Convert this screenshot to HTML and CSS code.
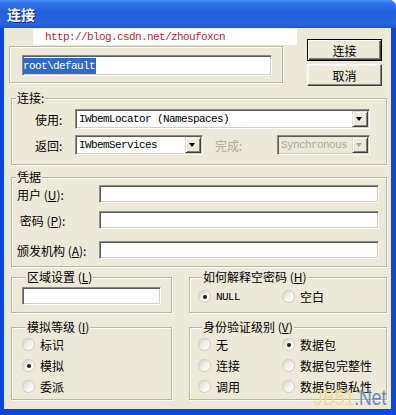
FILE: index.html
```html
<!DOCTYPE html>
<html>
  <head>
    <meta charset="utf-8">
    <title>连接</title>
    <link rel="stylesheet" href="styles.css">
  </head>
  <body>
    <div class="window">
      <div class="titlebar"><span class="title">连接</span></div>

      <div class="client">
        <div class="top">
          <div class="ns-col">
            <div class="url">http://blog.csdn.net/zhoufoxcn</div>
            <div class="ns-frame">
              <div class="sunken ns-field"><span class="sel">root\default</span></div>
            </div>
          </div>
          <div class="buttons">
            <button class="btn default" type="button">连接</button>
            <button class="btn" type="button">取消</button>
          </div>
        </div>

        <fieldset class="group conn">
          <legend>连接:</legend>
          <div class="row">
            <span class="lbl">使用:</span>
            <div class="sunken combo use"><span class="combo-text">IWbemLocator (Namespaces)</span><span class="drop"></span></div>
          </div>
          <div class="row">
            <span class="lbl">返回:</span>
            <div class="sunken combo ret"><span class="combo-text">IWbemServices</span><span class="drop"></span></div>
            <span class="lbl done">完成:</span>
            <div class="sunken combo sync disabled"><span class="combo-text">Synchronous</span><span class="drop"></span></div>
          </div>
        </fieldset>

        <fieldset class="group cred">
          <legend>凭据</legend>
          <div class="cred-row">
            <span class="cred-lbl">用户 (<u>U</u>):</span>
            <div class="sunken cred-field"></div>
          </div>
          <div class="cred-row pwd">
            <span class="cred-lbl">&nbsp;密码 (<u>P</u>):</span>
            <div class="sunken cred-field"></div>
          </div>
          <div class="cred-row auth">
            <span class="cred-lbl">颁发机构 (<u>A</u>):</span>
            <div class="sunken cred-field"></div>
          </div>
        </fieldset>

        <div class="cols">
          <fieldset class="group locale">
            <legend>区域设置 (<u>L</u>)</legend>
            <div class="sunken locale-field"></div>
          </fieldset>

          <fieldset class="group nullpw">
            <legend>如何解释空密码 (<u>H</u>)</legend>
            <div class="radios two">
              <div class="radio"><span class="dot checked"></span><span class="mono">NULL</span></div>
              <div class="radio"><span class="dot"></span>空白</div>
            </div>
          </fieldset>

          <fieldset class="group imp">
            <legend>模拟等级 (<u>I</u>)</legend>
            <div class="radios">
              <div class="radio"><span class="dot"></span>标识</div>
              <div class="radio"><span class="dot checked"></span>模拟</div>
              <div class="radio"><span class="dot"></span>委派</div>
            </div>
          </fieldset>

          <fieldset class="group authlvl">
            <legend>身份验证级别 (<u>V</u>)</legend>
            <div class="radios two">
              <div class="radio"><span class="dot"></span>无</div>
              <div class="radio"><span class="dot checked"></span>数据包</div>
              <div class="radio"><span class="dot"></span>连接</div>
              <div class="radio"><span class="dot"></span>数据包完整性</div>
              <div class="radio"><span class="dot"></span>调用</div>
              <div class="radio"><span class="dot"></span>数据包隐私性</div>
            </div>
          </fieldset>
        </div>
      </div>

      <div class="mark"><span class="jb">JB51</span><span class="net">.Net</span></div>
    </div>
  </body>
</html>
```

FILE: styles.css
```css
body { margin: 0; background: #fff; font-family: "Noto Sans CJK SC", sans-serif; font-size: 12px; color: #000; }

.window { position: relative; width: 396px; height: 415px; display: flex; flex-direction: column; background: #0b47dc; border-radius: 0 7px 0 0; overflow: hidden; }

.titlebar { height: 28px; flex: none; background: linear-gradient(#4a8ff6 0%, #2f72ea 12%, #245fdb 45%, #2766df 85%, #1d55d0 100%); }
.title { display: block; padding-left: 7px; color: #fff; font-weight: bold; font-size: 14px; line-height: 28px; text-shadow: 1px 1px #10208c; }

.client { flex: 1; margin: 0 5px 6px 4px; background: #ece9d8; display: flex; flex-direction: column; }

/* top part: namespace + buttons */
.top { display: flex; height: 59px; flex: none; }
.ns-col { margin-left: 5px; width: 288px; display: flex; flex-direction: column; }
.url { margin: 1px 0 0 24px; width: 264px; height: 16px; box-sizing: border-box; padding-left: 12px; background: #fff; color: #b52a2f; font: 11px/16px "Liberation Mono", monospace; letter-spacing: -0.6px; }
.ns-frame { margin-top: 1px; width: 274px; height: 37px; box-sizing: border-box; padding: 8px 0 0 12px; border: 1px solid #b9b6a6; box-shadow: inset 1px 1px #fff, 1px 1px #fff; }
.ns-field { width: 250px; height: 21px; display: flex; align-items: center; }
.sel { background: #316ac5; color: #fff; font: 11px/16px "Liberation Mono", monospace; letter-spacing: -0.6px; padding-right: 1px; }

.buttons { margin: 11px 0 0 10px; display: flex; flex-direction: column; gap: 3px; }
.btn { width: 75px; height: 22px; padding: 0; font-family: inherit; font-size: 12px; color: #000; background: #ece9d8; border: 1px solid; border-color: #fff #404040 #404040 #fff; box-shadow: inset -1px -1px #808080, inset 1px 1px #f6f5ef; }
.btn.default { border: 1px solid #000; box-shadow: inset 1px 1px #fff, inset -1px -1px #404040, inset -2px -2px #808080; }

/* group boxes */
.group { margin: 0 4px 0 7px; padding: 0; min-width: 0; border: 1px solid #b9b6a6; box-shadow: inset 1px 1px #fff, 1px 1px #fff; }
.group legend { margin-left: 4px; padding: 0 1px; height: 14px; line-height: 14px; font-size: 12px; background: #ece9d8; }

.conn { margin-top: 4px; padding: 4px 0 9px; }
.row { display: flex; align-items: center; height: 20px; padding-left: 23px; }
.row + .row { margin-top: 6px; }
.lbl { width: 40px; flex: none; }
.lbl.done { margin-left: 12px; width: 62px; color: #aca899; }

.sunken { box-sizing: border-box; background: #fff; border: 1px solid; border-color: #8a8a8a #fff #fff #8a8a8a; box-shadow: inset 1px 1px #5c5c5c, inset -1px -1px #d4d0c8; }
.combo { height: 20px; display: flex; align-items: center; padding: 1px; }
.combo.use { width: 295px; }
.combo.ret { width: 128px; }
.combo.sync { width: 93px; }
.combo-text { flex: 1; padding-left: 2px; font: 11px/16px "Liberation Mono", monospace; letter-spacing: -0.6px; white-space: nowrap; overflow: hidden; }
.disabled { background: #ece9d8; }
.disabled .combo-text { color: #aca899; }
.drop { position: relative; width: 16px; height: 16px; flex: none; box-sizing: border-box; background: #ece9d8; border: 1px solid; border-color: #e4e1d4 #404040 #404040 #e4e1d4; box-shadow: inset 1px 1px #fff, inset -1px -1px #808080; }
.drop::after { content: ""; position: absolute; left: 3px; top: 5px; border-top: 4px solid #000; border-left: 3.5px solid transparent; border-right: 3.5px solid transparent; }
.disabled .drop::after { border-top-color: #aca899; }

.cred { margin-top: 5px; padding: 1px 0 7px; }
.cred-row { display: flex; align-items: center; height: 18px; padding-left: 5px; }
.cred-row.pwd { margin-top: 8px; }
.cred-row.auth { margin-top: 12px; }
.cred-lbl { width: 82px; flex: none; white-space: nowrap; }
.cred-field { width: 280px; height: 18px; }

/* bottom two columns */
.cols { display: grid; grid-template-columns: 161px 198px; column-gap: 17px; row-gap: 7px; margin: 3px 4px 0 7px; }
.cols .group { margin: 0; }
.locale { padding: 3px 0 7px 10px; }
.locale-field { width: 139px; height: 18px; }
.nullpw { padding: 2px 0 4px 8px; }
.imp { padding: 0 0 2px 10px; }
.authlvl { padding: 0 0 2px 8px; }

.radios.two { display: grid; grid-template-columns: 84px auto; }
.radio { display: flex; align-items: center; gap: 5px; height: 21px; white-space: nowrap; }
.dot { position: relative; width: 13px; height: 13px; flex: none; box-sizing: border-box; border-radius: 50%; border: 1px solid #cfccbe; background: linear-gradient(135deg, #d6d3c6 0%, #f4f3ee 55%, #fff 100%); }
.dot.checked::after { content: ""; position: absolute; left: 3.5px; top: 3.5px; width: 4px; height: 4px; border-radius: 50%; background: #1d1d1d; }
.mono { font: 11px "Liberation Mono", monospace; letter-spacing: -0.6px; }

.mark { position: absolute; right: 9px; bottom: 6px; font: 22px/22px "Liberation Sans", sans-serif; transform: scaleX(0.8); transform-origin: right bottom; }
.mark .jb { color: #ecd98e; }
.mark .net { color: #6a8cb3; }
```
